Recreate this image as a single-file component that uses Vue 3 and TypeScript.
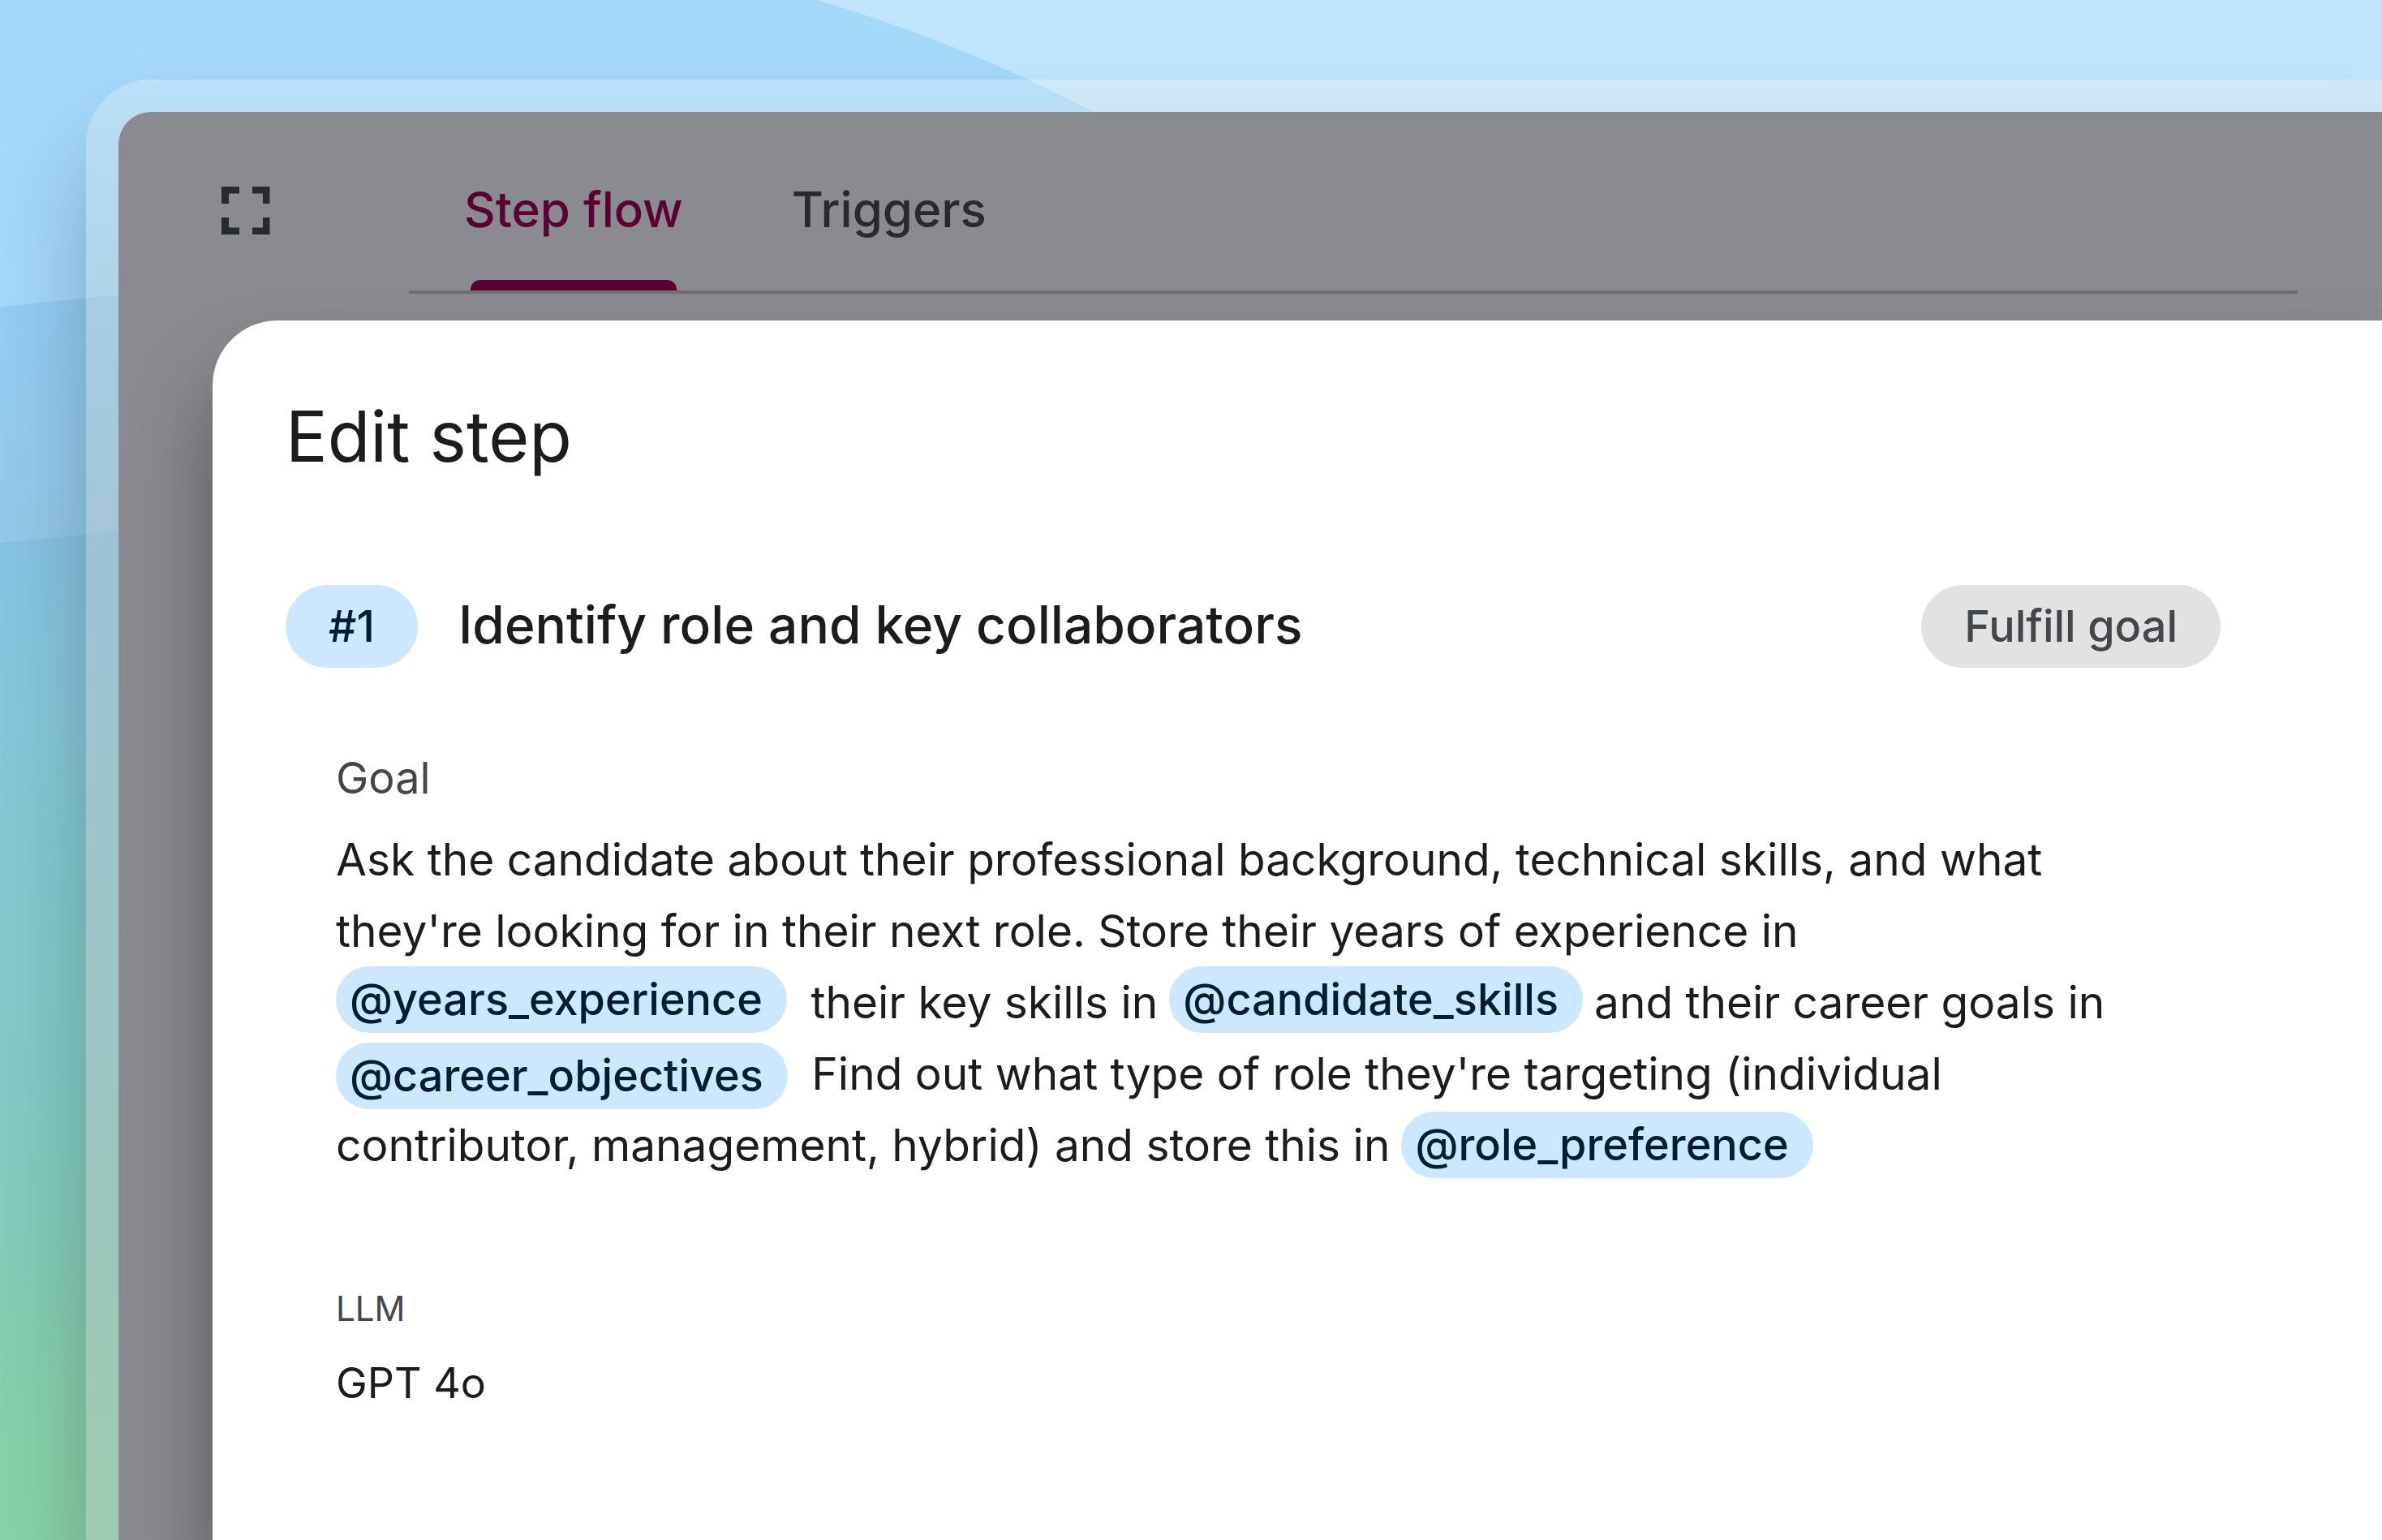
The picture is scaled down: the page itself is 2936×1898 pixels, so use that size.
<script setup lang="ts">
import { ref } from 'vue'

type Align = 'start' | 'center' | 'end'

interface Part {
  text: string
  variable?: boolean
}

interface GoalLine {
  align: Align
  parts: Part[]
}

const tabs: string[] = ['Step flow', 'Triggers']
const activeTab = ref<string>('Step flow')

const goal: GoalLine[] = [
  {
    align: 'center',
    parts: [{ text: 'Ask the candidate about their professional background, technical skills, and what' }],
  },
  {
    align: 'center',
    parts: [{ text: "they're looking for in their next role. Store their years of experience in" }],
  },
  {
    align: 'start',
    parts: [
      { text: '@years_experience', variable: true },
      { text: ' their key skills in' },
      { text: '@candidate_skills', variable: true },
      { text: 'and their career goals in' },
    ],
  },
  {
    align: 'end',
    parts: [
      { text: '@career_objectives', variable: true },
      { text: " Find out what type of role they're targeting (individual" },
    ],
  },
  {
    align: 'center',
    parts: [
      { text: 'contributor, management, hybrid) and store this in' },
      { text: '@role_preference', variable: true },
    ],
  },
]
</script>

<template>
  <div class="scene">
    <svg class="backdrop" aria-hidden="true">
      <defs>
        <linearGradient id="mid" gradientUnits="userSpaceOnUse" x1="0" y1="370" x2="0" y2="668">
          <stop offset="0" stop-color="#91cff4" />
          <stop offset="1" stop-color="#93cbe7" />
        </linearGradient>
        <linearGradient id="low" gradientUnits="userSpaceOnUse" x1="0" y1="660" x2="0" y2="1898">
          <stop offset="0" stop-color="#86c5e2" />
          <stop offset="0.22" stop-color="#86c9d8" />
          <stop offset="0.36" stop-color="#84cbd0" />
          <stop offset="0.52" stop-color="#84cbc9" />
          <stop offset="0.68" stop-color="#84cdbc" />
          <stop offset="0.84" stop-color="#87d2ae" />
          <stop offset="1" stop-color="#8ad4a9" />
        </linearGradient>
      </defs>
      <path fill="#a3d9fb" d="M0 0H1007Q1182 51 1348 138L1600 300V700H0Z" />
      <path fill="url(#mid)" d="M0 378L146 363H400V2200H0Z" />
      <path fill="url(#low)" d="M0 669L146 655H400V2200H0Z" />
      <path fill="#7cc4b8" fill-opacity="0.06" d="M0 937L146 925H400V2200H0Z" />
    </svg>

    <div class="frame">
      <main class="panel">
        <header class="toolbar">
          <button class="expand" type="button" aria-label="Full screen">
            <svg width="60" height="60" viewBox="0 0 60 60" fill="#272a2e">
              <path d="M0 0H22V8.500H9V21H0Z" />
              <path d="M38 0H59.500V21H51V8.500H38Z" />
              <path d="M0 38H9V50.500H22V59H0Z" />
              <path d="M51 38H59.500V59H38V50.500H51Z" />
            </svg>
          </button>
          <nav class="tabs">
            <button
              v-for="tab in tabs"
              :key="tab"
              class="tab"
              :class="{ active: tab === activeTab }"
              type="button"
              @click="activeTab = tab"
            >
              {{ tab }}
            </button>
          </nav>
        </header>

        <section class="dialog" role="dialog" aria-labelledby="dialog-title">
          <h1 id="dialog-title" class="title">Edit step</h1>

          <div class="step">
            <span class="badge number">#1</span>
            <h2 class="step-name">Identify role and key collaborators</h2>
            <span class="badge kind">Fulfill goal</span>
          </div>

          <div class="details">
            <h3 class="label">Goal</h3>
            <p class="goal">
              <span v-for="(line, i) in goal" :key="i" class="line" :class="line.align">
                <span
                  v-for="part in line.parts"
                  :key="part.text"
                  :class="part.variable ? 'variable' : 'words'"
                >{{ part.text }}</span>
              </span>
            </p>
            <h3 class="label llm">LLM</h3>
            <p class="model">GPT 4o</p>
          </div>
        </section>
      </main>
    </div>
  </div>
</template>

<style>
body {
  margin: 0;
}
</style>

<style scoped>
.scene {
  position: relative;
  display: flex;
  box-sizing: border-box;
  min-height: 100vh;
  padding: 98px 0 0 106px;
  overflow: hidden;
  background: #c0e5fd;
  font-family: Inter, 'Liberation Sans', sans-serif;
  color: #1a1c1e;
}

.backdrop {
  position: absolute;
  inset: 0;
  width: 100%;
  height: 100%;
}

.frame {
  position: relative;
  display: flex;
  flex: 1;
  box-sizing: border-box;
  min-width: 0;
  padding: 40px 0 0 40px;
  border-radius: 80px 0 0 0;
  background: linear-gradient(
    rgba(240, 240, 240, 0.32),
    rgba(229, 229, 229, 0.34) 40px,
    rgba(203, 203, 203, 0.38) 260px,
    rgba(192, 192, 192, 0.4) 500px
  );
  box-shadow: 0 80px 116px rgba(0, 0, 0, 0.24);
}

.panel {
  display: flex;
  flex: 1;
  flex-direction: column;
  min-width: 0;
  border-radius: 40px 0 0 0;
  background: #8a8b90;
}

.toolbar {
  display: flex;
  height: 224px;
  padding: 0 104px 0 127px;
}

.expand {
  align-self: flex-start;
  width: 60px;
  height: 60px;
  margin: 92px 171px 0 0;
  padding: 0;
  border: 0;
  background: none;
}

.expand svg {
  display: block;
}

.tabs {
  display: flex;
  flex: 1;
  gap: 134px;
  padding-left: 68px;
  border-bottom: 4px solid #6e7076;
}

.tab {
  position: relative;
  padding: 20px 0 0;
  border: 0;
  background: none;
  font: 500 60px/80px Inter, 'Liberation Sans', sans-serif;
  color: #272a2e;
}

.tab.active {
  color: #5c0033;
}

.tab.active::after {
  content: '';
  position: absolute;
  right: 8px;
  bottom: 0;
  left: 8px;
  height: 13px;
  border-radius: 12px 12px 0 0;
  background: #5c0033;
}

.dialog {
  flex: 1;
  margin: 33px 0 0 116px;
  padding: 93px 199px 92px 90px;
  border-radius: 80px 0 0 0;
  background: #fff;
  box-shadow: 0 70px 100px rgba(0, 0, 0, 0.38);
}

.title {
  margin: 0;
  font-size: 86px;
  font-weight: 400;
  line-height: 100px;
}

.step {
  display: flex;
  align-items: center;
  margin-top: 133px;
}

.badge {
  padding: 0 53px;
  border-radius: 51px;
  font-size: 54px;
  font-weight: 500;
  line-height: 102px;
}

.number {
  background: #cce7ff;
  color: #001e31;
}

.kind {
  margin-left: auto;
  background: #e2e2e2;
  color: #43474b;
}

.step-name {
  margin: 0 0 0 50px;
  padding-bottom: 4px;
  font-size: 64px;
  font-weight: 500;
  line-height: 80px;
}

.details {
  padding-left: 62px;
}

.label {
  margin: 106px 0 0;
  font-size: 54px;
  font-weight: 400;
  line-height: 60px;
  color: #43474b;
}

.label.llm {
  margin-top: 128px;
  font-size: 42px;
}

.goal {
  margin: 26px 0 0;
  font-size: 55px;
  line-height: 88px;
}

.line {
  display: flex;
  gap: 14px;
  height: 88px;
  white-space: pre;
}

.start {
  align-items: flex-start;
}

.center {
  align-items: center;
}

.end {
  align-items: flex-end;
}

.variable {
  padding: 0 30px 0 17px;
  border-radius: 41px;
  background: #cce7ff;
  font-size: 54px;
  font-weight: 500;
  line-height: 82px;
  color: #001e31;
}

.model {
  margin: 26px 0 0;
  font-size: 52px;
  line-height: 72px;
}
</style>
